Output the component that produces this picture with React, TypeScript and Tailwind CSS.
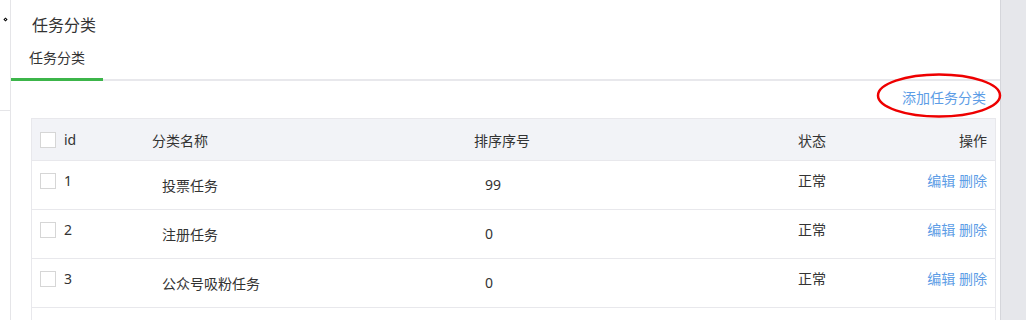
const ROWS = [
  { id: 1, name: "投票任务", sort: 99, status: "正常" },
  { id: 2, name: "注册任务", sort: 0, status: "正常" },
  { id: 3, name: "公众号吸粉任务", sort: 0, status: "正常" },
];

function Check() {
  return <span className="block h-[16px] w-[16px] shrink-0 border border-[#d6d6d6] bg-white" />;
}

export default function App() {
  return (
    <div
      className="flex h-[320px] w-[1026px] overflow-hidden bg-white text-[#333]"
      style={{ fontFamily: '"Noto Sans", "Noto Sans CJK SC", sans-serif' }}
    >
      {/* left strip */}
      <div className="relative w-[11px] shrink-0 border-r border-[#e5e5e8]">
        <span className="absolute left-[4px] top-[18px] block h-[3px] w-[3px] rotate-45 border border-black" />
        <div className="absolute left-0 top-[110px] h-px w-[10px] bg-[#e5e5e8]" />
      </div>

      {/* main */}
      <div className="flex min-w-0 flex-1 flex-col">
        <div className="pl-[21px] pt-[13px] text-[16px] leading-[24px]">任务分类</div>

        <div className="mt-[11px] flex border-b-2 border-[#e8e8ec]">
          <div className="-mb-[2px] w-[92px] border-b-[3px] border-[#3cb54a] pb-[10px] text-center text-[14px] leading-[20px]">
            任务分类
          </div>
        </div>

        <div className="relative flex justify-end pb-[10px] pr-[14px] pt-[7px]">
          <a className="text-[14px] leading-[20px] text-[#5d9de6]">添加任务分类</a>
          <svg className="absolute left-[865px] top-[-8px]" width="126" height="46" viewBox="0 0 126 46">
            <ellipse cx="63" cy="22.5" rx="61" ry="21" fill="none" stroke="#ee0000" strokeWidth="2.5" />
          </svg>
        </div>

        <div className="ml-[20px] mr-[4px] flex flex-1 flex-col border-x border-t border-[#e8e8ec] text-[14px] leading-[20px]">
          <div className="flex h-[42px] items-center border-b border-[#e8e8ec] bg-[#f2f3f7]">
            <div className="flex w-[112px] items-center gap-[8px] pl-[8px]">
              <Check />
              <span>id</span>
            </div>
            <div className="w-[322px] pl-[8px] pt-[3px]">分类名称</div>
            <div className="w-[324px] pl-[8px] pt-[3px]">排序序号</div>
            <div className="flex-1 pl-[8px] pt-[3px]">状态</div>
            <div className="w-[100px] pr-[8px] pt-[3px] text-right">操作</div>
          </div>
          {ROWS.map((r) => (
            <div key={r.id} className="flex h-[49px] items-start border-b border-[#e8e8ec]">
              <div className="flex w-[112px] items-start gap-[8px] pl-[8px] pt-[12px]">
                <Check />
                <span className="-mt-[2px]">{r.id}</span>
              </div>
              <div className="w-[322px] pl-[18px] pt-[15px]">{r.name}</div>
              <div className="w-[324px] pl-[19px] pt-[14px]">{r.sort}</div>
              <div className="flex-1 pl-[8px] pt-[10px]">{r.status}</div>
              <div className="w-[100px] pr-[8px] pt-[10px] text-right text-[#5d9de6]">
                <a>编辑</a> <a>删除</a>
              </div>
            </div>
          ))}
        </div>
      </div>

      {/* right gutter */}
      <div className="w-[26px] shrink-0 border-l border-[#d5d6db] bg-[#e6e7eb]" />
    </div>
  );
}
